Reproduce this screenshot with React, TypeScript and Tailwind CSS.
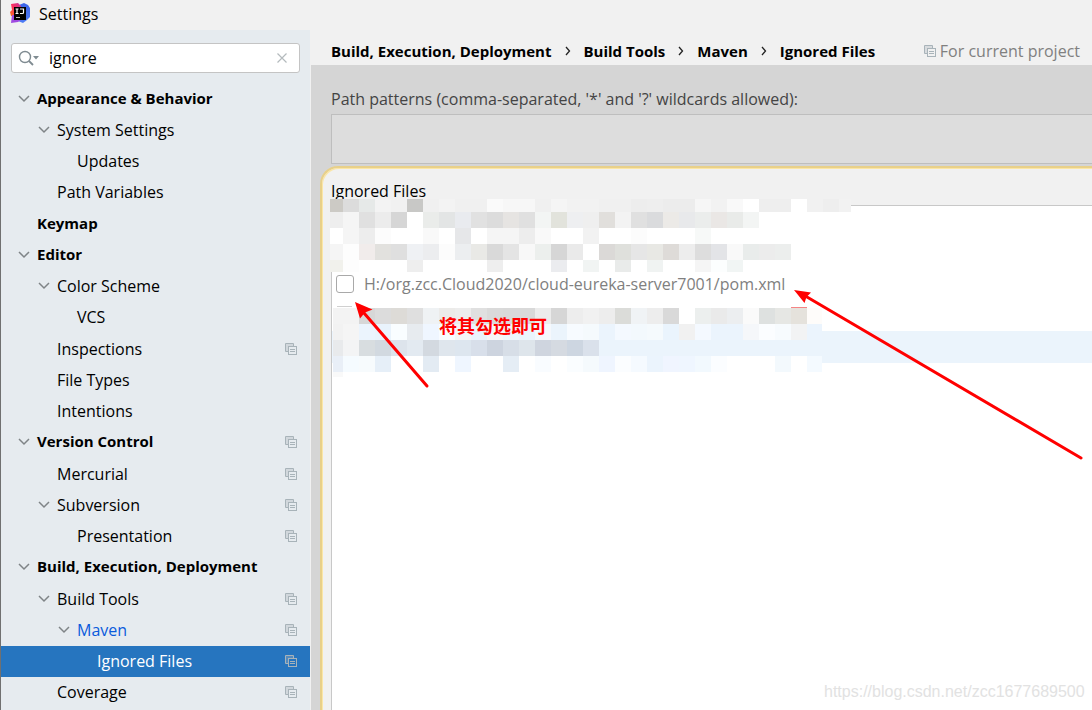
import React, { useState } from 'react'

interface TreeItem {
  label: string
  level: number
  open?: boolean
  bold?: boolean
  project?: boolean
  changed?: boolean
}

const treeItems: TreeItem[] = [
  { label: 'Appearance & Behavior', level: 0, open: true, bold: true },
  { label: 'System Settings', level: 1, open: true },
  { label: 'Updates', level: 2 },
  { label: 'Path Variables', level: 1 },
  { label: 'Keymap', level: 0, bold: true },
  { label: 'Editor', level: 0, open: true, bold: true },
  { label: 'Color Scheme', level: 1, open: true },
  { label: 'VCS', level: 2 },
  { label: 'Inspections', level: 1, project: true },
  { label: 'File Types', level: 1 },
  { label: 'Intentions', level: 1 },
  { label: 'Version Control', level: 0, open: true, bold: true, project: true },
  { label: 'Mercurial', level: 1, project: true },
  { label: 'Subversion', level: 1, open: true, project: true },
  { label: 'Presentation', level: 2, project: true },
  { label: 'Build, Execution, Deployment', level: 0, open: true, bold: true },
  { label: 'Build Tools', level: 1, open: true, project: true },
  { label: 'Maven', level: 2, open: true, project: true, changed: true },
  { label: 'Ignored Files', level: 3, project: true },
  { label: 'Coverage', level: 1, project: true },
]

const indents = ['pl-4', 'pl-9', 'pl-14', 'pl-[76px]']

const crumbs = ['Build, Execution, Deployment', 'Build Tools', 'Maven', 'Ignored Files']

// Rows of censored entries, one hex colour per block ("-" leaves the block empty)
const mosaic = [
  { y: 199, h: 13, cells: 'cccac5 dcdcdc e6e9e8 f3f3f3 f1f1f1 c8c8c6 f0f0f0 f3f3f3 f0f0f0 f0f0f0 fafafa f7f7f7 f7f7f7 f0f0f0 f5f5f5 f2f2f2 f2f2f2 f0f0f0 f0f0f0 ededed eeeeee ececec ececec f6f6f6 f2f2f2 f9f9f9 ffffff eeeeee eeeeee ffffff f1f1f1 eeeeee f2f2f2' },
  { y: 212, h: 16, cells: 'eeeeee f5f5f5 e0e0e0 ececec d6d6d6 ffffff eaecea e3e5e5 e9ebef e1e1e1 dcdcdc e6e4e2 e0e0e0 f3f5f4 e2e3dc eeeff1 efefef e1dfdc f3f3f3 e0e0e0 dadbdd eceae7 e8e9eb ebedec eae7e5 e9ebe9 f3f5f4' },
  { y: 228, h: 16, cells: 'ffffff f5f5f5 ededed fcfcfc ffffff ffffff f9f9f9 ffffff e6e7e9 ffffff f5f5f5 f5f5f5 ededed f9f9f9 ffffff ffffff f2f2f2 - - fcfcfc - - - f7f9f8' },
  { y: 244, h: 16, cells: 'f5f5f5 fdfdfd f1eceb e2e1de dfdfdf eff1f4 ecedef fcfcfc eceef0 e9e9e6 d9d9d9 e4e4e4 f8f8f8 ecefed d6d6d6 eaeaea ffffff dbd9d7 dfe0dc e6e6e6 e8e8e4 dedbd8 ededed dddddd e3e4e7 f9f9f9 e9eceb ececec eceeed' },
  { y: 260, h: 12, cells: 'f1f1ec fdfdfd - - - eeeeee - - - - eeeeee - - - ebecef - f1f4f3 - e9ebea - f0f3f2 - - f5f5f5 fcfefe f1f5f4' },
  { y: 308, h: 16, cells: 'f3f3f3 f3f3f3 d7d7d7 dcdcdc dddbd7 dfdfdf eff2f4 ecebe9 ededed e0e0e0 dadada d9d9d9 d9d9d9 ececec d6d6d6 ededed f1f1f1 ededed dbdcd9 f0f3f5 ededed d9d9d9 ffffff ecefee eaeaea eceef0 fafafa dee1e0 e6e7e4 e5e2dc fefcfa' },
  { y: 324, h: 16, cells: 'f2f2f2 f5f5f5 ebf4fd e9f3fc f9fdff e7ebef eff6ff f9fcff f5f5f5 eaf4fc f7f7f7 eef6fc eaf4fc f5f8fc ebf4fc f7fbff f5fafd ebf4fd f4f9ff f3f9fd f5fafd eaf4fd f1f1f1 f4f9ff ebf4fd ebf4fd f5f7fa fbfdff f7fbfe f2f3f4 ebf4fd' },
  { y: 340, h: 16, cells: 'e8eaec f3f4f5 d8dde0 d2d9e0 dde4ec e3eaf1 d3d9e0 dfe6ed dde6ef d8dfea cdd4df d7dee7 dee5eb cfd5df d5dae1 cdd6e1 dae1eb' },
  { y: 356, h: 16, cells: 'e9eff7 f5fbff f7fbfd e6eff8 ffffff ffffff e3ebf3 ffffff eff6ff ffffff ffffff e5edf5 ffffff f9fcff ffffff fafdff f5fafd eff5ff fbfdff f5faff ebf4fd f0f5ff eff6ff f2f9fe fbfdff ffffff ffffff ffffff f3f9fd ffffff f4faff' },
  { y: 372, h: 5, cells: 'f9f9f9' },
]

const Logo = () => (
  <svg width="22" height="20" viewBox="0 0 22 20" aria-hidden="true">
    <defs>
      <linearGradient id="warm" x1="0" y1="1" x2="1" y2="0">
        <stop offset="0" stopColor="#f97a12" />
        <stop offset="0.5" stopColor="#fe315d" />
        <stop offset="1" stopColor="#c0369c" />
      </linearGradient>
      <linearGradient id="cool" x1="0" y1="0" x2="0" y2="1">
        <stop offset="0" stopColor="#3b63e8" />
        <stop offset="1" stopColor="#4f7df5" />
      </linearGradient>
    </defs>
    <path d="M10 2l5-2 4 2 2 3v9l-3 3-4 3-5-2z" fill="url(#cool)" />
    <path d="M2 1l7-1 3 3v5l-6 6-4-1-1-4 2-2z" fill="url(#warm)" />
    <path d="M3 12h7l2 5-3 2-7 1z" fill="#a04be0" />
    <rect x="5" y="4" width="12" height="13" fill="#000" />
    <path d="M6.500 6h3M8 6v4.500M6.500 10.500h3M11 6h3.500v3.500q0 1-1 1h-2.500" fill="none" stroke="#fff" strokeWidth="1.200" />
    <path d="M7 14.500h4" stroke="#bbb" />
  </svg>
)

const ProjectIcon = () => (
  <svg width="12" height="12" viewBox="0 0 12 12" aria-hidden="true" className="shrink-0">
    <path d="M8.500 3v-2.500h-8v8h2.500" fill="none" stroke="#a8b3b9" />
    <path d="M1 1h7v2h-5v5h-2z" fill="#a8b3b9" fillOpacity="0.350" />
    <rect x="3.500" y="3.500" width="8" height="8" fill="none" stroke="#a8b3b9" />
    <path d="M5 6.500h5M5 8.500h5" stroke="#a8b3b9" />
  </svg>
)

const Chevron = () => (
  <svg width="12" height="12" viewBox="0 0 12 12" aria-hidden="true">
    <path d="M1 3l5 5 5-5" fill="none" stroke="#7f8487" strokeWidth="1.500" />
  </svg>
)

const Sidebar: React.FC = () => {
  const [query, setQuery] = useState('ignore')
  const [selected, setSelected] = useState('Ignored Files')

  return (
    <aside className="w-[310px] shrink-0 bg-[#e6ebef] border-r border-[#f1f1f1]">
      <div className="ml-2.5 mr-2.5 mt-[13px] mb-[10px] flex h-[30px] items-center rounded-[3px] border border-[#c4c4c4] bg-white pl-1.5 pr-[11px]">
        <svg width="22" height="18" viewBox="0 0 22 18" aria-hidden="true" className="shrink-0">
          <circle cx="7" cy="8" r="5.500" fill="none" stroke="#7f8b91" strokeWidth="1.400" />
          <path d="M11 12l4 4" stroke="#7f8b91" strokeWidth="1.800" />
          <path d="M15 7h6l-3 3.500z" fill="#7f8b91" />
        </svg>
        <input
          type="text"
          aria-label="Search settings"
          value={query}
          onChange={(e) => setQuery(e.target.value)}
          className="ml-[9px] min-w-0 flex-1 bg-transparent outline-none"
        />
        <button type="button" aria-label="Clear" onClick={() => setQuery('')}>
          <svg width="12" height="12" viewBox="0 0 12 12">
            <path d="M1.500 1.500l9 9M10.500 1.500l-9 9" stroke="#b4babd" strokeWidth="1.200" />
          </svg>
        </button>
      </div>
      <ul className="grid h-[625px] auto-rows-fr">
        {treeItems.map((item) => {
          const isSelected = item.label === selected
          return (
            <li key={item.label} className="flex">
              <button
                type="button"
                onClick={() => setSelected(item.label)}
                className={`flex flex-1 items-center pr-[13px] text-left ${indents[item.level]} ${
                  isSelected ? 'bg-[#2675bf] text-white' : item.changed ? 'text-[#0b5bdc]' : ''
                } ${item.bold ? 'text-[15px] font-bold' : ''}`}
              >
                <span className="w-5 shrink-0 pl-px">{item.open && <Chevron />}</span>
                <span className={item.bold ? 'flex-1 pb-0.5' : 'flex-1'}>{item.label}</span>
                {item.project && <ProjectIcon />}
              </button>
            </li>
          )
        })}
      </ul>
    </aside>
  )
}

const Annotations = () => (
  <div className="pointer-events-none absolute -left-px top-0">
    <svg width="1092" height="710" viewBox="0 0 1092 710" aria-hidden="true">
      <g shapeRendering="crispEdges">
        {mosaic.map((row) =>
          row.cells.split(' ').map((color, i) => {
            if (color === '-') return null
            const first = row.y > 300 ? 333 : 330
            const x = i === 0 ? first : 327 + i * 16
            const right = Math.min(343 + i * 16, row.y > 300 ? 822 : 851)
            return <rect key={`${row.y}-${i}`} x={x} y={row.y} width={right - x} height={row.h} fill={`#${color}`} />
          })
        )}
        <rect x="337" y="306" width="15" height="1" fill="#d0d0d0" />
        <rect x="791" y="307" width="16" height="1" fill="#f58585" />
      </g>
      <g fill="#f00">
        <path d="M427 386L364 313" stroke="#f00" strokeWidth="3" strokeLinecap="round" />
        <path d="M1081 458L807 297" stroke="#f00" strokeWidth="3" strokeLinecap="round" />
        <path d="M355 302L372.500 309.500 365 312.500 360 318.500z" />
        <path d="M794 290L811 292.500 806.500 297 804.500 303z" />
      </g>
    </svg>
    <p className="absolute left-[439px] top-[315px] whitespace-nowrap font-['Liberation_Serif','Noto_Sans_CJK_SC',serif] text-[18px] font-bold leading-6 text-[#f00]">
      将其勾选即可
    </p>
    <p className="absolute left-[824px] top-[682px] whitespace-nowrap font-['Liberation_Sans',sans-serif] text-base leading-5 text-[#e2e2e2]">
      https://blog.csdn.net/zcc1677689500
    </p>
  </div>
)

export default function App() {
  const [patterns, setPatterns] = useState('')
  const [ignored, setIgnored] = useState(false)

  return (
    <div className="relative flex h-screen flex-col overflow-hidden border-l border-[#707070] bg-[#f1f1f1] font-['Open_Sans','Noto_Sans_CJK_SC',sans-serif] text-[16px] leading-5 text-black">
      <header className="flex h-[30px] shrink-0 items-center gap-2 pl-2 pb-1">
        <Logo />
        <h1 className="pt-0.5">Settings</h1>
      </header>
      <div className="flex min-h-0 flex-1">
        <Sidebar />
        <main className="flex min-w-0 flex-1 flex-col bg-[#d5d5d5]">
          <div className="flex h-[35px] shrink-0 items-center justify-between bg-[#f1f1f1] pl-5 pr-3 pt-1.5">
            <nav aria-label="Breadcrumb">
              <ol className="flex items-center gap-[13px] whitespace-nowrap text-[15px] font-bold">
                {crumbs.map((crumb, i) => (
                  <li key={crumb} className="flex items-center gap-[13px]">
                    {i > 0 && (
                      <svg width="6" height="10" viewBox="0 0 6 10" aria-hidden="true">
                        <path d="M1 1l3.500 4-3.500 4" fill="none" stroke="#222" strokeWidth="1.300" />
                      </svg>
                    )}
                    <a href="#">{crumb}</a>
                  </li>
                ))}
              </ol>
            </nav>
            <p className="flex items-center gap-1 whitespace-nowrap text-[#808080]">
              <ProjectIcon />
              For current project
            </p>
          </div>

          <div className="flex flex-col gap-[5px] pl-5 pt-6">
            <label htmlFor="patterns" className="text-[#444]">
              Path patterns (comma-separated, '*' and '?' wildcards allowed):
            </label>
            <input
              id="patterns"
              type="text"
              value={patterns}
              onChange={(e) => setPatterns(e.target.value)}
              className="h-[50px] border border-r-0 border-[#bebebe] bg-[#ddd] px-2 outline-none"
            />
          </div>

          <section className="ml-[9px] mt-0.5 flex min-h-0 flex-1 flex-col rounded-tl-[18px] border-l-2 border-t-2 border-[#e8d08a] bg-[#f1f1f1] pl-[9px] pt-[13px] shadow-[inset_1px_1px_0_#fbe6a6]">
            <h2>Ignored Files</h2>
            <div className="mt-1 flex-1 border-l border-t border-[#c8c8c8] bg-white pt-[68px]">
              <label className="flex items-center gap-2.5 pl-1 text-[#808080]">
                <input
                  type="checkbox"
                  checked={ignored}
                  onChange={(e) => setIgnored(e.target.checked)}
                  className="size-[18px] appearance-none rounded-[3px] border border-[#a9a9a9] bg-white checked:bg-[#2675bf]"
                />
                H:/org.zcc.Cloud2020/cloud-eureka-server7001/pom.xml
              </label>
              <div className="mt-[37px] h-8 bg-[#ebf4fc]" />
            </div>
          </section>
        </main>
      </div>
      <Annotations />
    </div>
  )
}
